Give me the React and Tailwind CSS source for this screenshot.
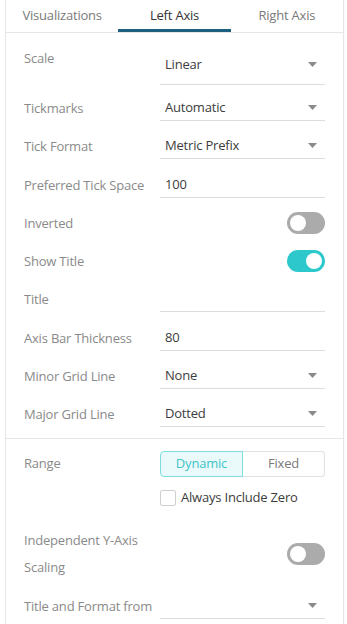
import React from "react";

const Arrow = () => (
  <svg width="9" height="5" viewBox="0 0 9 5" className="shrink-0">
    <path d="M0 0 H9 L4.5 5 Z" fill="#8a8a8a" />
  </svg>
);

const Toggle = ({ on }) => (
  <div
    className={
      "w-[38px] h-[22px] rounded-full flex items-center px-[3px] " +
      (on ? "bg-[#2cc8cc] justify-end" : "bg-[#ababab] justify-start")
    }
  >
    <div className="w-[16px] h-[16px] rounded-full bg-white" />
  </div>
);

const Row = ({ label, children, extra = "" }) => (
  <div className={"h-[38px] flex items-center " + extra}>
    <div className="w-[136px] text-[#8a8a8a] leading-[20px]">{label}</div>
    <div className="flex-1 flex items-center">{children}</div>
  </div>
);

const Select = ({ value }) => (
  <div className="flex-1 h-[26px] border-b border-[#dcdcdc] flex items-center justify-between pl-[5px] pr-[8px] text-[#3c3c3c]">
    <span>{value}</span>
    <Arrow />
  </div>
);

const Input = ({ value }) => (
  <div className="flex-1 h-[26px] border-b border-[#dcdcdc] flex items-center pl-[5px] text-[#3c3c3c]">
    <span>{value}</span>
  </div>
);

export default function App() {
  return (
    <div
      className="w-[347px] h-[624px] bg-white overflow-hidden text-[13px] tracking-[-0.2px]"
      style={{ fontFamily: '"Open Sans", "Noto Sans", sans-serif' }}
    >
      <div className="ml-[5px] w-[339px] h-full border-x border-[#e6e6e6] flex flex-col">
        <div className="h-[33px] shrink-0 flex border-b border-[#e6e6e6]">
          <div className="flex-1 flex items-center justify-center text-[#7a7a7a]">Visualizations</div>
          <div className="flex-1 flex items-center justify-center text-[#333] border-b-[3px] border-[#1d5f7e] pt-[3px]">Left Axis</div>
          <div className="flex-1 flex items-center justify-center text-[#7a7a7a]">Right Axis</div>
        </div>
        <div className="px-[18px]">
          <div className="h-[56px] flex items-start">
            <div className="w-[136px] mt-[15px] leading-[20px] text-[#8a8a8a]">Scale</div>
            <div className="flex-1 mt-[14px] h-[38px] pt-[7px] border-b border-[#dcdcdc] flex items-start justify-between pl-[5px] pr-[8px] text-[#3c3c3c]">
              <span className="leading-[20px]">Linear</span>
              <div className="mt-[8px]"><Arrow /></div>
            </div>
          </div>
          <Row label="Tickmarks"><Select value="Automatic" /></Row>
          <Row label="Tick Format"><Select value="Metric Prefix" /></Row>
          <Row label="Preferred Tick Space" extra="mt-[1px]"><Input value="100" /></Row>
          <Row label="Inverted"><div className="flex-1 flex justify-end"><Toggle /></div></Row>
          <Row label="Show Title"><div className="flex-1 flex justify-end"><Toggle on /></div></Row>
          <Row label="Title"><Input value="" /></Row>
          <Row label="Axis Bar Thickness" extra="mt-[1px]"><Input value="80" /></Row>
          <Row label="Minor Grid Line"><Select value="None" /></Row>
          <Row label="Major Grid Line"><Select value="Dotted" /></Row>
        </div>
        <div className="mt-[5px] border-t border-[#e6e6e6] px-[18px]">
          <div className="mt-[12px] h-[26px] flex items-center">
            <div className="w-[136px] text-[#8a8a8a]">Range</div>
            <div className="flex-1 flex h-[26px]">
              <div className="flex-1 flex items-center justify-center border border-[#7fdcdc] bg-[#eafafa] text-[#3fc4c8] rounded-l-[4px]">Dynamic</div>
              <div className="flex-1 flex items-center justify-center border border-l-0 border-[#e0e0e0] text-[#7a7a7a] rounded-r-[4px]">Fixed</div>
            </div>
          </div>
          <div className="mt-[11px] flex items-center pl-[136px]">
            <div className="w-[16px] h-[16px] border border-[#cfcfcf] rounded-[2px] bg-white" />
            <span className="ml-[5px] text-[#3c3c3c]">Always Include Zero</span>
          </div>
          <div className="mt-[19px] flex items-center">
            <div className="w-[136px] text-[#8a8a8a] leading-[27px]">
              <div>Independent Y-Axis</div>
              <div>Scaling</div>
            </div>
            <div className="flex-1 flex justify-end"><Toggle /></div>
          </div>
          <div className="mt-[6px]">
            <Row label="Title and Format from"><Select value="" /></Row>
          </div>
        </div>
      </div>
    </div>
  );
}
